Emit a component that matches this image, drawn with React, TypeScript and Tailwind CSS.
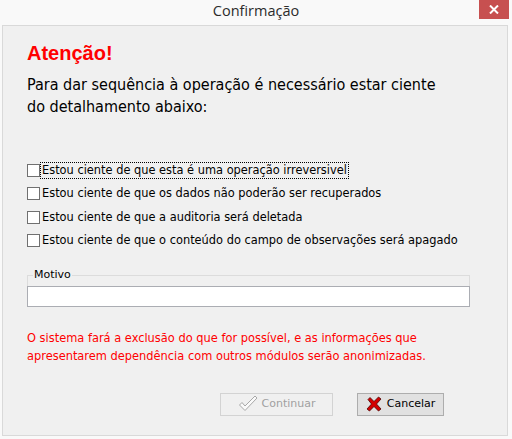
import { useState } from 'react';

const options = [
  'Estou ciente de que esta é uma operação irreversivel',
  'Estou ciente de que os dados não poderão ser recuperados',
  'Estou ciente de que a auditoria será deletada',
  'Estou ciente de que o conteúdo do campo de observações será apagado',
];

const tahoma = "font-['Tahoma','DejaVu_Sans',sans-serif]";
const tahomaNarrow = "font-['DejaVu_Sans_Condensed','DejaVu_Sans',sans-serif]";

export default function App() {
  const [checked, setChecked] = useState<boolean[]>([false, false, false, false]);
  const [motivo, setMotivo] = useState('');

  const allChecked = checked.every(Boolean) && motivo.trim() !== '';

  return (
    <div className="w-[512px] h-[439px] bg-[#f9f9f9] flex flex-col overflow-hidden">
      {/* Title bar */}
      <div className="relative h-[25px] flex items-start justify-center">
        <span className="mt-[1px] text-[14.5px] leading-[20px] text-[#2b2b2b] font-['Open_Sans',sans-serif]">
          Confirmação
        </span>
        <button className="absolute right-[3px] top-0 w-[30px] h-[19px] bg-[#c75050] flex items-center justify-center">
          <svg width="10" height="9" viewBox="0 0 10 9">
            <path d="M1 0.5 L9 8.5 M9 0.5 L1 8.5" stroke="#fff" strokeWidth="2" />
          </svg>
        </button>
      </div>

      {/* Client area */}
      <div className={`ml-[2px] mr-[4px] h-[411px] border border-[#d9d9d9] bg-[#f0f0f0] flex flex-col px-[24px] ${tahoma}`}>
        <div className="mt-[15px] text-[20px] leading-[24px] font-bold text-[#ff0000] font-['Liberation_Sans',sans-serif]">
          Atenção!
        </div>
        <p className={`mt-[9px] text-[16px] leading-[22px] text-black ${tahomaNarrow}`}>
          Para dar sequência à operação é necessário estar ciente
          <br />
          do detalhamento abaixo:
        </p>

        <div className="mt-[46px] flex flex-col gap-[10.3px]">
          {options.map((label, i) => (
            <label key={i} className="flex items-center h-[13px] text-[11.4px] text-black cursor-default">
              <span
                onClick={() => setChecked(checked.map((c, j) => (j === i ? !c : c)))}
                className="w-[13px] h-[13px] border border-[#707070] bg-white shrink-0 flex items-center justify-center"
              >
                {checked[i] && (
                  <svg width="9" height="9" viewBox="0 0 9 9">
                    <path d="M1 4.5 L3.5 7 L8 1.5" stroke="#222" strokeWidth="1.6" fill="none" />
                  </svg>
                )}
              </span>
              <span
                className={`ml-[1px] px-[1px] leading-[15px] ${i === 0 ? 'outline outline-1 outline-dotted outline-black' : ''}`}
              >
                {label}
              </span>
            </label>
          ))}
        </div>

        {/* Motivo group */}
        <div className="mt-[23px] mr-[13px] relative">
          <div className="h-[11px] border-t border-x border-[#dcdcdc] mt-[5px]" />
          <span className="absolute left-[6px] -top-[2px] bg-[#f0f0f0] px-[1px] text-[11px] leading-[13px] text-black">
            Motivo
          </span>
          <input
            value={motivo}
            onChange={(e) => setMotivo(e.target.value)}
            className="block w-full h-[21px] border border-[#abadb3] bg-white outline-none text-[11px] px-[2px]"
          />
        </div>

        <p className={`mt-[22px] text-[12.7px] leading-[18px] text-[#ff0000] ${tahomaNarrow}`}>
          O sistema fará a exclusão do que for possível, e as informações que
          <br />
          apresentarem dependência com outros módulos serão anonimizadas.
        </p>

        {/* Buttons */}
        <div className="mt-[28px] flex justify-end gap-[24px] mr-[39px]">
          <button
            disabled={!allChecked}
            className={`w-[113px] h-[23px] border flex items-center justify-center gap-[4px] text-[11px] ${
              allChecked ? 'border-[#adadad] bg-[#e1e1e1] text-black' : 'border-[#d3d3d3] bg-[#f0f0f0] text-[#a0a0a0]'
            }`}
          >
            <svg width="20" height="18" viewBox="0 0 20 18">
              <path
                d="M1.5 10 L4 7.5 L7 11 L17 1 L19 3 L7 15.5 Z"
                fill="#fafafa"
                stroke="#a8a8a8"
                strokeWidth="1"
                strokeLinejoin="round"
              />
            </svg>
            Continuar
          </button>
          <button className="w-[87px] h-[23px] border border-[#adadad] bg-[#e1e1e1] flex items-center justify-center gap-[5px] text-[11px] text-black">
            <svg width="16" height="16" viewBox="0 0 16 16">
              <path
                d="M2 3.5 L4 1.5 L8 5.5 L12.5 1 L15 3 L10.5 8 L15 13 L12.5 15 L8 10.5 L3.5 15 L1 13 L5.5 8 Z"
                fill="#d40000"
                stroke="#4a0000"
                strokeWidth="0.8"
                strokeLinejoin="round"
              />
            </svg>
            Cancelar
          </button>
        </div>
      </div>
    </div>
  );
}
